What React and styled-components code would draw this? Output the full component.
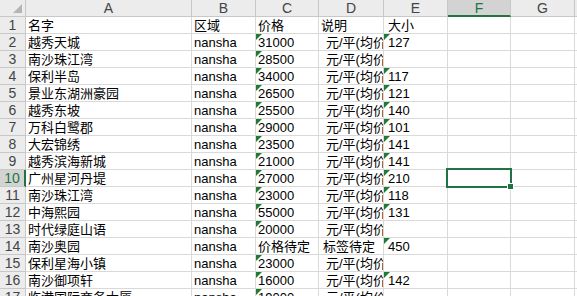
import React from "react";
import styled, { createGlobalStyle } from "styled-components";

const Global = createGlobalStyle`
  html, body {
    margin: 0;
    padding: 0;
    background: #fff;
    overflow: hidden;
  }
`;

const Sheet = styled.div`
  display: grid;
  grid-template-columns: 26px 166px 64px 63px 65px 64px 63px 64px 1fr;
  grid-auto-rows: 17px;
  width: 577px;
  height: 296px;
  overflow: hidden;
  font-family: "Liberation Sans", "Noto Sans CJK SC", sans-serif;
  font-size: 13px;
  color: #000;
`;

const Cell = styled.div`
  position: relative;
  box-sizing: border-box;
  border-right: 1px solid #d9d9d9;
  border-bottom: 1px solid #d9d9d9;
  padding: 0 0 0 ${(p) => (p.$indent ? p.$indent : 2)}px;
  line-height: 17px;
  white-space: nowrap;
  overflow: ${(p) => (p.$active ? "visible" : "hidden")};

  ${(p) =>
    p.$flag &&
    `
    &::before {
      content: "";
      position: absolute;
      left: 0;
      top: 0;
      border-top: 6px solid #1f7a35;
      border-right: 6px solid transparent;
    }
  `}
`;

const Head = styled.div`
  position: relative;
  box-sizing: border-box;
  background: ${(p) => (p.$on ? "#d3d3d3" : "#ececec")};
  color: ${(p) => (p.$on ? "#217346" : "#444")};
  border-right: ${(p) => (p.$side && p.$on ? "2px solid #217346" : "1px solid #c8c8c8")};
  border-bottom: ${(p) => (!p.$side && p.$on ? "2px solid #217346" : "1px solid #c8c8c8")};
  text-align: center;
  line-height: 17px;
  font-size: 14px;
  overflow: hidden;
`;

const Corner = styled(Head)`
  &::after {
    content: "";
    position: absolute;
    right: 3px;
    bottom: 3px;
    border-bottom: 9px solid #b5b5b5;
    border-left: 9px solid transparent;
  }
`;

const Selection = styled.div`
  position: absolute;
  left: -2px;
  top: -2px;
  width: 66px;
  height: 20px;
  box-sizing: border-box;
  border: 2px solid #217346;
  z-index: 2;

  &::after {
    content: "";
    position: absolute;
    right: -4px;
    bottom: -4px;
    width: 5px;
    height: 5px;
    background: #217346;
    border: 1px solid #fff;
  }
`;

const P = "元/平(均价)";

const rows = [
  ["名字", "区域", "价格", "说明", "大小"],
  ["越秀天城", "nansha", "31000", P, "127"],
  ["南沙珠江湾", "nansha", "28500", P, ""],
  ["保利半岛", "nansha", "34000", P, "117"],
  ["景业东湖洲豪园", "nansha", "26500", P, "121"],
  ["越秀东坡", "nansha", "25500", P, "140"],
  ["万科白鹭郡", "nansha", "29000", P, "101"],
  ["大宏锦绣", "nansha", "23500", P, "141"],
  ["越秀滨海新城", "nansha", "21000", P, "141"],
  ["广州星河丹堤", "nansha", "27000", P, "210"],
  ["南沙珠江湾", "nansha", "23000", P, "118"],
  ["中海熙园", "nansha", "55000", P, "131"],
  ["时代绿庭山语", "nansha", "20000", P, ""],
  ["南沙奥园", "nansha", "价格待定", "标签待定", "450"],
  ["保利星海小镇", "nansha", "23000", P, ""],
  ["南沙御项轩", "nansha", "16000", P, "142"],
  ["临港国际商务大厦", "nansha", "19000", P, ""],
];

const letters = ["A", "B", "C", "D", "E", "F", "G", ""];

const isNum = (v) => /^\d+$/.test(v);

export default function App() {
  return (
    <>
      <Global />
      <Sheet>
        <Corner />
        {letters.map((l) => (
          <Head key={l || "x"} $on={l === "F"}>
            {l}
          </Head>
        ))}
        {rows.map((r, i) => {
          const n = i + 1;
          return (
            <React.Fragment key={n}>
              <Head $side $on={n === 10}>
                {n}
              </Head>
              <Cell>{r[0]}</Cell>
              <Cell>{r[1]}</Cell>
              <Cell $flag={n > 1 && isNum(r[2])}>{r[2]}</Cell>
              <Cell $indent={n === 1 ? 2 : r[3] === P ? 7 : 4}>{r[3]}</Cell>
              <Cell $flag={n > 1 && isNum(r[4])} $indent={4}>
                {r[4]}
              </Cell>
              <Cell $active={n === 10}>{n === 10 && <Selection />}</Cell>
              <Cell />
              <Cell />
            </React.Fragment>
          );
        })}
      </Sheet>
    </>
  );
}
